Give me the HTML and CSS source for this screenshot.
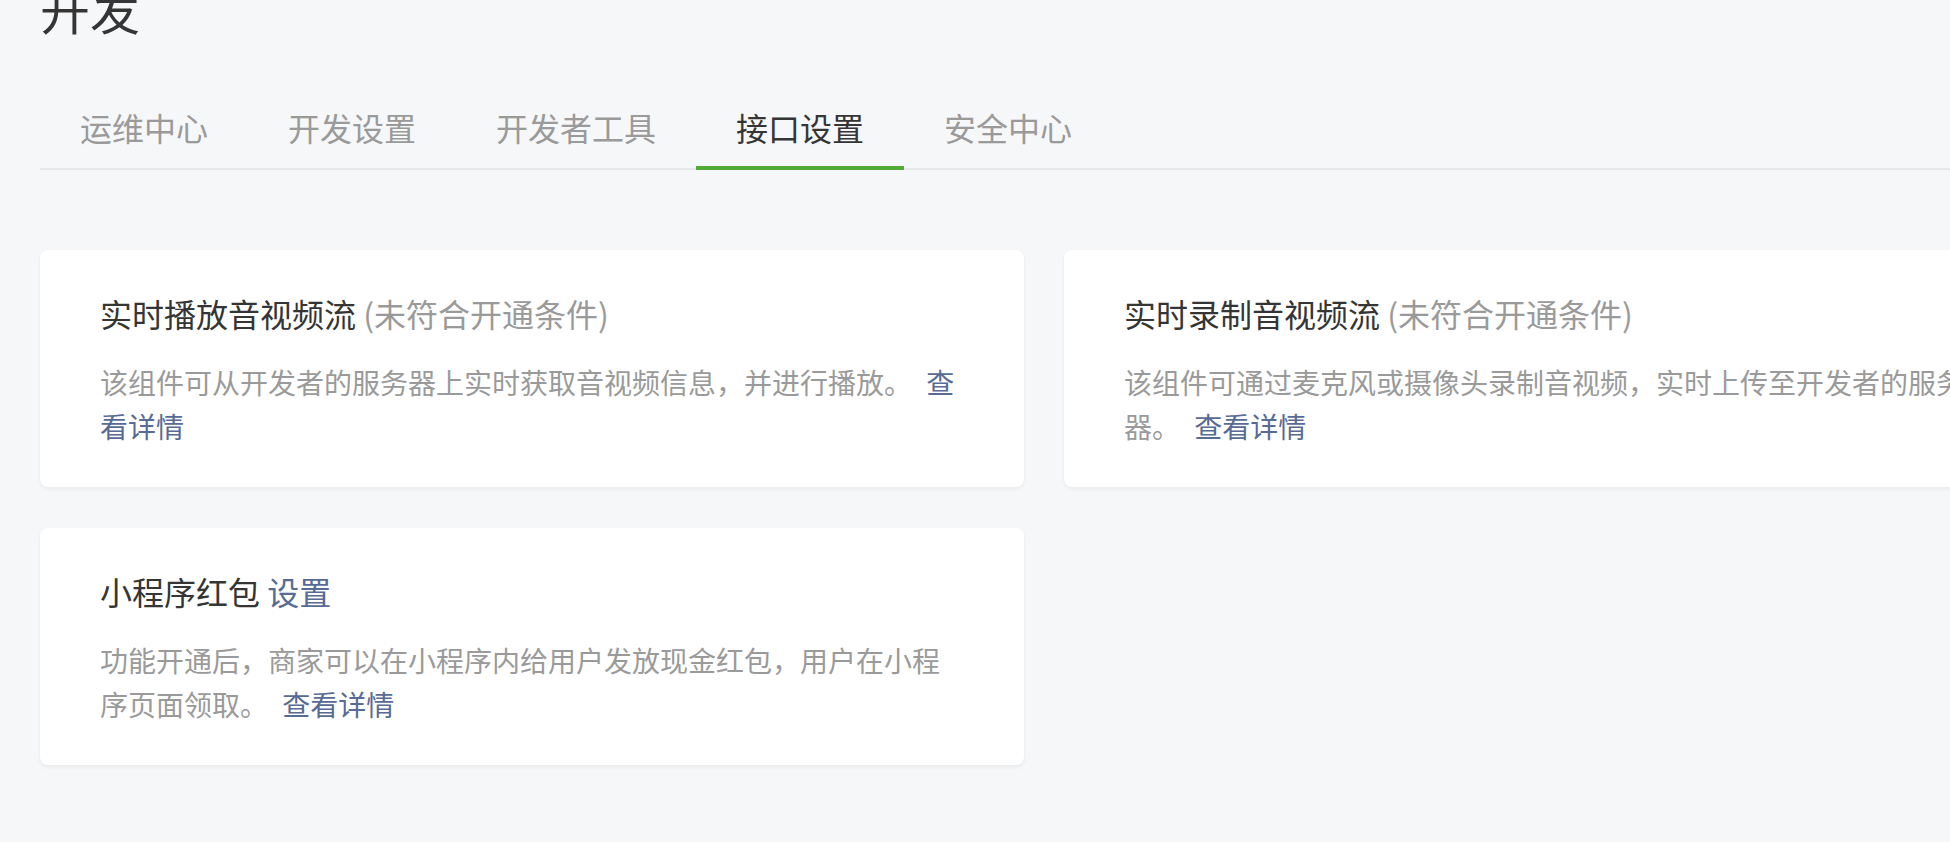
FILE: index.html
```html
<!DOCTYPE html>
<html lang="zh-CN">
<head>
<meta charset="utf-8">
<title>开发</title>
<link rel="stylesheet" href="styles.css">
</head>
<body>
<div class="page">
  <h1 class="page-title">开发</h1>
  <nav class="tabs">
    <a class="tab">运维中心</a>
    <a class="tab">开发设置</a>
    <a class="tab">开发者工具</a>
    <a class="tab tab-active">接口设置</a>
    <a class="tab">安全中心</a>
  </nav>
  <div class="cards">
    <div class="card">
      <div class="card-title">实时播放音视频流 <span class="muted">(未符合开通条件)</span></div>
      <p class="card-desc">该组件可从开发者的服务器上实时获取音视频信息，并进行播放。 <a class="link more">查看详情</a></p>
    </div>
    <div class="card">
      <div class="card-title">实时录制音视频流 <span class="muted">(未符合开通条件)</span></div>
      <p class="card-desc">该组件可通过麦克风或摄像头录制音视频，实时上传至开发者的服务器。 <a class="link more">查看详情</a></p>
    </div>
    <div class="card">
      <div class="card-title">小程序红包 <a class="link">设置</a></div>
      <p class="card-desc">功能开通后，商家可以在小程序内给用户发放现金红包，用户在小程序页面领取。 <a class="link more">查看详情</a></p>
    </div>
  </div>
</div>
</body>
</html>
```

FILE: styles.css
```css
html, body {
  margin: 0;
  padding: 0;
}
body {
  background: #f6f7f9;
  font-family: "Noto Sans CJK SC", "Noto Sans", sans-serif;
  color: #353535;
  overflow: hidden;
  width: 1950px;
  height: 842px;
}
.page {
  width: 2008px;
  padding-left: 40px;
}
.page-title {
  margin: -17px 0 0 0;
  font-size: 50px;
  line-height: 50px;
  font-weight: normal;
  color: #353535;
}
.tabs {
  display: flex;
  margin-top: 72px;
  border-bottom: 2px solid #e7e7e7;
}
.tab {
  display: block;
  padding: 0 40px 17px;
  font-size: 32px;
  line-height: 44px;
  color: #9a9a9a;
  border-bottom: 4px solid transparent;
  margin-bottom: -2px;
  cursor: pointer;
}
.tab-active {
  color: #353535;
  border-bottom-color: #51a938;
}
.cards {
  display: grid;
  grid-template-columns: 984px 984px;
  column-gap: 40px;
  row-gap: 41px;
  margin-top: 80px;
}
.card {
  background: #fff;
  border-radius: 8px;
  box-shadow: 0 2px 4px rgba(0, 0, 0, 0.06);
  padding: 40px 60px 39px;
}
.card-title {
  font-size: 32px;
  line-height: 46px;
  color: #353535;
}
.muted {
  color: #9a9a9a;
}
.card-desc {
  margin: 24px 0 0;
  font-size: 28px;
  line-height: 44px;
  color: #9a9a9a;
}
.link {
  color: #576b95;
  text-decoration: none;
  cursor: pointer;
}
.more {
  margin-left: 8px;
}
```
